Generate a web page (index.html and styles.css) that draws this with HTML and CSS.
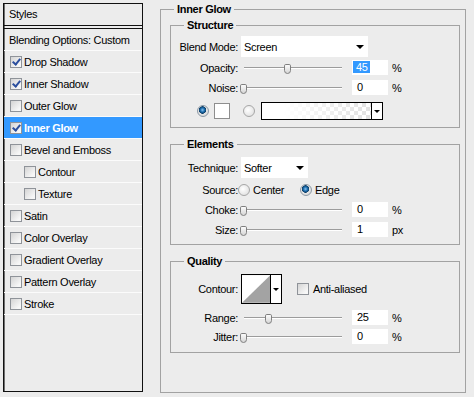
FILE: index.html
```html
<!DOCTYPE html>
<html lang="en">
<head>
    <meta charset="UTF-8">
    <title>Layer Style - Inner Glow</title>
    <link rel="stylesheet" href="styles.css">
</head>
<body>
    <div class="dialog">
        <!-- list of layer effects -->
        <div class="styles-panel">
            <div class="panel-title">Styles</div>
            <div class="style-item plain">Blending Options: Custom</div>
            <div class="style-item"><span class="check on"></span>Drop Shadow</div>
            <div class="style-item"><span class="check on"></span>Inner Shadow</div>
            <div class="style-item"><span class="check"></span>Outer Glow</div>
            <div class="style-item active"><span class="check on"></span>Inner Glow</div>
            <div class="style-item"><span class="check"></span>Bevel and Emboss</div>
            <div class="style-item sub"><span class="check"></span>Contour</div>
            <div class="style-item sub"><span class="check"></span>Texture</div>
            <div class="style-item"><span class="check"></span>Satin</div>
            <div class="style-item"><span class="check"></span>Color Overlay</div>
            <div class="style-item"><span class="check"></span>Gradient Overlay</div>
            <div class="style-item"><span class="check"></span>Pattern Overlay</div>
            <div class="style-item"><span class="check"></span>Stroke</div>
        </div>

        <!-- settings of the selected effect -->
        <fieldset class="group outer">
            <legend>Inner Glow</legend>

            <fieldset class="group structure">
                <legend>Structure</legend>
                <div class="row select-row">
                    <span class="lbl">Blend Mode:</span>
                    <div class="select blend">Screen<span class="arrow"></span></div>
                </div>
                <div class="row value-row opacity">
                    <span class="lbl">Opacity:</span>
                    <div class="slider"><span class="thumb" style="left: 45%"></span></div>
                    <div class="num"><span class="selected">45</span></div>
                    <span class="unit">%</span>
                </div>
                <div class="row value-row noise">
                    <span class="lbl">Noise:</span>
                    <div class="slider"><span class="thumb" style="left: 0%"></span></div>
                    <div class="num">0</div>
                    <span class="unit">%</span>
                </div>
                <div class="row color-row">
                    <span class="radio on"></span>
                    <span class="swatch"></span>
                    <span class="radio"></span>
                    <div class="gradient">
                        <span class="gradient-fill"></span>
                        <span class="gradient-drop"><span class="arrow"></span></span>
                    </div>
                </div>
            </fieldset>

            <fieldset class="group elements">
                <legend>Elements</legend>
                <div class="row select-row">
                    <span class="lbl">Technique:</span>
                    <div class="select technique">Softer<span class="arrow"></span></div>
                </div>
                <div class="row source-row">
                    <span class="lbl">Source:</span>
                    <span class="option center"><span class="radio"></span>Center</span>
                    <span class="option"><span class="radio on"></span>Edge</span>
                </div>
                <div class="row value-row choke">
                    <span class="lbl">Choke:</span>
                    <div class="slider"><span class="thumb" style="left: 0%"></span></div>
                    <div class="num">0</div>
                    <span class="unit">%</span>
                </div>
                <div class="row value-row size">
                    <span class="lbl">Size:</span>
                    <div class="slider"><span class="thumb" style="left: 0%"></span></div>
                    <div class="num">1</div>
                    <span class="unit">px</span>
                </div>
            </fieldset>

            <fieldset class="group quality">
                <legend>Quality</legend>
                <div class="row contour-row">
                    <span class="lbl">Contour:</span>
                    <div class="contour">
                        <svg class="contour-preview" width="29" height="28" viewBox="0 0 29 28">
                            <rect width="29" height="28" fill="#fff"/>
                            <polygon points="0,28 29,0 29,28" fill="#a3a3a3"/>
                        </svg>
                        <span class="contour-drop"><span class="arrow"></span></span>
                    </div>
                    <span class="check"></span>
                    <span class="check-text">Anti-aliased</span>
                </div>
                <div class="row value-row range">
                    <span class="lbl">Range:</span>
                    <div class="slider"><span class="thumb" style="left: 25%"></span></div>
                    <div class="num">25</div>
                    <span class="unit">%</span>
                </div>
                <div class="row value-row jitter">
                    <span class="lbl">Jitter:</span>
                    <div class="slider"><span class="thumb" style="left: 0%"></span></div>
                    <div class="num">0</div>
                    <span class="unit">%</span>
                </div>
            </fieldset>
        </fieldset>
    </div>
</body>
</html>
```

FILE: styles.css
```css
body {
    margin: 0;
    background: #ececec;
    font-family: "Liberation Sans", Arial, sans-serif;
    font-size: 11px;
    letter-spacing: -0.3px;
    color: #000;
}
.dialog {
    display: flex;
    align-items: flex-start;
    padding: 3px 0 0 3px;
}

/* left list */
.styles-panel {
    width: 140px;
    height: 389px;
    box-sizing: border-box;
    border: 1px solid #111;
    box-shadow: inset 1px 0 0 #6f6f6f;
}
.panel-title {
    height: 21px;
    line-height: 21px;
    padding-left: 5px;
    border-bottom: 4px double #111;
}
.style-item {
    display: flex;
    align-items: center;
    height: 21px;
    padding-left: 6px;
    border-bottom: 1px solid #fbfbfb;
    white-space: nowrap;
}
.style-item.plain {
    padding-left: 5px;
}
.style-item.sub {
    padding-left: 20px;
}
.style-item.active {
    background: #3399ff;
    color: #fff;
    font-weight: bold;
}
.check {
    display: inline-flex;
    justify-content: center;
    align-items: center;
    flex: none;
    width: 12px;
    height: 12px;
    box-sizing: border-box;
    margin-right: 2px;
    border: 1px solid #8f9399;
    background: linear-gradient(135deg, #d4d4d4, #f7f7f7 80%);
}
.check.on::after {
    content: "";
    width: 3px;
    height: 6px;
    margin-top: -2px;
    border: solid #2c4f9e;
    border-width: 0 2px 2px 0;
    transform: rotate(40deg);
}

/* group boxes */
.group {
    margin: 0;
    padding: 0;
    min-width: 0;
    border: 1px solid #a2a2a2;
}
.group legend {
    margin-left: 13px;
    padding: 0 3px;
    line-height: 13px;
    font-weight: bold;
}
.outer {
    width: 306px;
    height: 390px;
    box-sizing: border-box;
    margin-left: 17px;
}
.outer .group {
    margin: 3px 5px 0 9px;
    padding-bottom: 7px;
}
.outer .elements,
.outer .quality {
    margin-top: 10px;
}
.outer .quality {
    padding-bottom: 8px;
}

/* rows */
.row {
    display: flex;
    align-items: center;
    white-space: nowrap;
}
.lbl {
    flex: none;
    width: 67px;
    margin-right: 3px;
    text-align: right;
}
.select-row {
    height: 21px;
}
.structure .select-row {
    margin-top: 4px;
}
.elements .select-row {
    margin-top: 6px;
}
.select {
    display: flex;
    align-items: center;
    justify-content: space-between;
    height: 21px;
    padding: 0 4px 0 3px;
    box-sizing: border-box;
    background: #fff;
}
.select.blend {
    width: 127px;
}
.select.technique {
    width: 67px;
}
.arrow {
    width: 0;
    height: 0;
    border-left: 4px solid transparent;
    border-right: 4px solid transparent;
    border-top: 4px solid #000;
}
.value-row {
    height: 15px;
}
.opacity {
    margin-top: 3px;
}
.noise {
    margin-top: 5px;
}
.choke {
    margin-top: 6px;
}
.size {
    margin-top: 5px;
}
.range {
    margin-top: 6px;
}
.jitter {
    margin-top: 4px;
}
.slider {
    position: relative;
    width: 98px;
    height: 2px;
    margin: 0 10px 0 3px;
    background: linear-gradient(#9c9c9c 50%, #fff 50%);
}
.thumb {
    position: absolute;
    top: -3px;
    width: 7px;
    height: 10px;
    margin-left: -4px;
    box-sizing: border-box;
    border: 1px solid #7f7f7f;
    border-radius: 2px 2px 4px 4px;
    background: linear-gradient(#fbfbfb, #d6d6d6);
}
.num {
    width: 36px;
    height: 15px;
    line-height: 15px;
    box-sizing: border-box;
    padding-left: 5px;
    background: #fff;
}
.num .selected {
    display: inline-block;
    margin-left: -4px;
    padding: 0 2px 0 3px;
    line-height: 12px;
    background: #3399ff;
    color: #fff;
}
.unit {
    margin-left: 4px;
}

/* colour row */
.color-row {
    height: 18px;
    margin-top: 7px;
    padding-left: 26px;
}
.radio {
    flex: none;
    width: 12px;
    height: 12px;
    box-sizing: border-box;
    border-radius: 50%;
    border: 1px solid #a6a6a6;
    background: radial-gradient(circle at 40% 40%, #ffffff, #d9d9d9);
}
.radio.on {
    border-color: #8d9aa6;
    background: radial-gradient(circle at 45% 40%, #8fc3ee 0, #1d6fb0 2px, #0d3d66 3.5px, #e6e6e6 4px, #cfcfcf);
}
.swatch {
    width: 16px;
    height: 16px;
    box-sizing: border-box;
    margin: 0 13px 0 5px;
    border: 1px solid #8e8e8e;
    background: #fff;
}
.gradient {
    display: flex;
    width: 122px;
    height: 18px;
    margin-left: 6px;
    box-sizing: border-box;
    border: 1px solid #000;
}
.gradient-fill {
    flex: 1;
    background:
        linear-gradient(90deg, #fff 20%, rgba(255, 255, 255, 0.1) 100%),
        repeating-conic-gradient(#dedede 0 25%, #fff 0 50%) 0 0 / 8px 8px;
}
.gradient-drop,
.contour-drop {
    display: flex;
    justify-content: center;
    align-items: center;
    width: 10px;
    border-left: 1px solid #000;
    background: #fff;
}
.gradient-drop .arrow,
.contour-drop .arrow {
    border-width: 3px 3px 0;
}

/* source */
.source-row {
    height: 13px;
    margin-top: 5px;
}
.source-row .lbl {
    margin-right: 0;
}
.option {
    display: flex;
    align-items: center;
}
.option .radio {
    margin-right: 3px;
}
.option.center {
    width: 62px;
}

/* contour */
.contour-row {
    height: 30px;
    margin-top: 6px;
}
.contour {
    display: flex;
    width: 41px;
    height: 30px;
    box-sizing: border-box;
    border: 1px solid #000;
}
.contour-preview {
    display: block;
}
.contour-row .check {
    margin-left: 15px;
}
.check-text {
    margin-left: 2px;
}
```
